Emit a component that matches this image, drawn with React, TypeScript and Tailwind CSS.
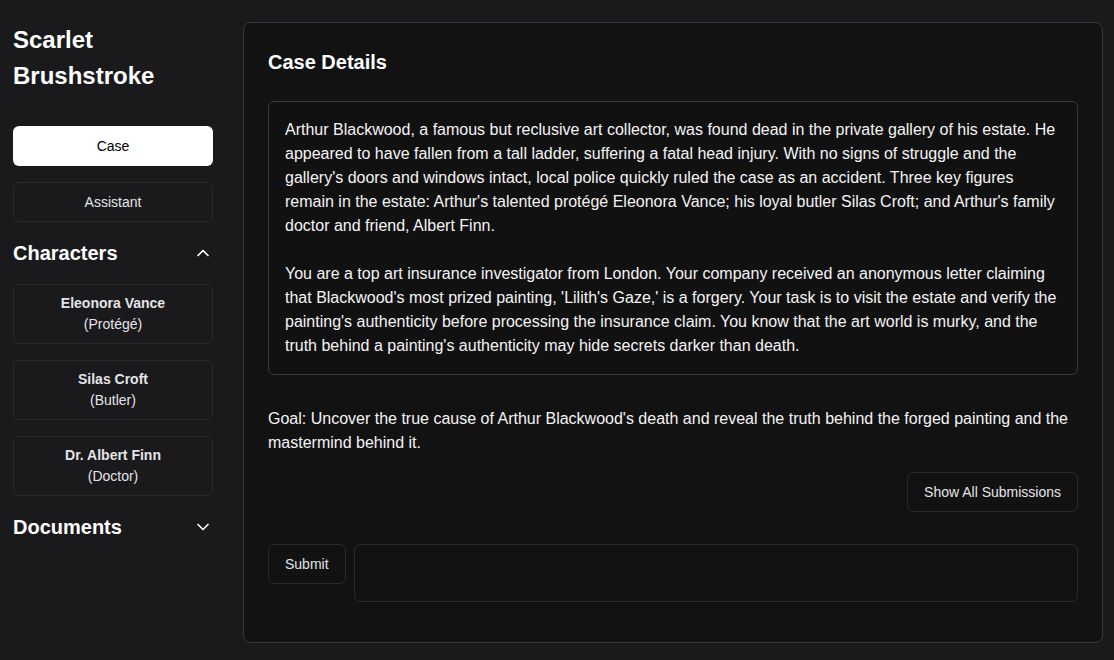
import { ChevronDown, ChevronUp } from "lucide-react";

const characters = [
  ["Eleonora Vance", "(Protégé)"],
  ["Silas Croft", "(Butler)"],
  ["Dr. Albert Finn", "(Doctor)"],
];

export default function App() {
  return (
    <div
      className="flex h-screen gap-[30px] bg-[#1a1a1d] pb-[17px] pl-[13px] pr-[11px] pt-[22px] text-white"
      style={{ fontFamily: '"Liberation Sans", Arial, sans-serif' }}
    >
      <aside className="flex w-[200px] shrink-0 flex-col">
        <h1 className="text-[24px] font-bold leading-[36px] text-white">
          Scarlet Brushstroke
        </h1>

        <div className="mt-[32px] flex flex-col gap-4">
          <button className="h-10 rounded-md bg-white text-sm text-black">
            Case
          </button>
          <button className="h-10 rounded-md border border-[#2a2a2e] text-sm text-[#e4e4e7]">
            Assistant
          </button>
        </div>

        <div className="my-4 flex h-[30px] items-center justify-between">
          <h2 className="text-[20px] font-bold text-white">Characters</h2>
          <ChevronUp size={20} strokeWidth={2} className="text-white" />
        </div>

        <div className="flex flex-col gap-4">
          {characters.map(([name, role]) => (
            <div
              key={name}
              className="rounded-md border border-[#2a2a2e] py-2 text-center text-sm leading-[21px]"
            >
              <div className="font-bold text-[#e4e4e7]">{name}</div>
              <div className="text-[#e4e4e7]">{role}</div>
            </div>
          ))}
        </div>

        <div className="mt-4 flex h-[30px] items-center justify-between">
          <h2 className="text-[20px] font-bold text-white">Documents</h2>
          <ChevronDown size={20} strokeWidth={2} className="text-white" />
        </div>
      </aside>

      <main className="flex flex-1 flex-col rounded-lg border border-[#3a3a3d] bg-[#121212] p-6">
        <h2 className="text-[20px] font-bold leading-[30px] text-white">
          Case Details
        </h2>

        <div className="mt-6 rounded-md border border-[#3a3a3d] bg-[#111111] p-4 text-base leading-6 text-[#f4f4f5]">
          <p>
            Arthur Blackwood, a famous but reclusive art collector, was found
            dead in the private gallery of his estate. He appeared to have
            fallen from a tall ladder, suffering a fatal head injury. With no
            signs of struggle and the gallery's doors and windows intact, local
            police quickly ruled the case as an accident. Three key figures
            remain in the estate: Arthur's talented protégé Eleonora Vance; his
            loyal butler Silas Croft; and Arthur's family doctor and friend,
            Albert Finn.
          </p>
          <p className="mt-6">
            You are a top art insurance investigator from London. Your company
            received an anonymous letter claiming that Blackwood's most prized
            painting, 'Lilith's Gaze,' is a forgery. Your task is to visit the
            estate and verify the painting's authenticity before processing the
            insurance claim. You know that the art world is murky, and the truth
            behind a painting's authenticity may hide secrets darker than death.
          </p>
        </div>

        <p className="mt-8 text-base leading-6 text-[#f4f4f5]">
          Goal: Uncover the true cause of Arthur Blackwood's death and reveal
          the truth behind the forged painting and the mastermind behind it.
        </p>

        <div className="mt-[17px] flex justify-end">
          <button className="h-10 rounded-md border border-[#2a2a2e] px-4 text-sm text-[#e4e4e7]">
            Show All Submissions
          </button>
        </div>

        <div className="mt-8 flex items-start gap-2">
          <button className="h-10 rounded-md border border-[#2a2a2e] px-4 text-sm text-[#e4e4e7]">
            Submit
          </button>
          <textarea className="h-[58px] flex-1 resize-none rounded-md border border-[#2a2a2e] bg-[#121212] px-3 py-2 text-sm text-white outline-none" />
        </div>
      </main>
    </div>
  );
}
